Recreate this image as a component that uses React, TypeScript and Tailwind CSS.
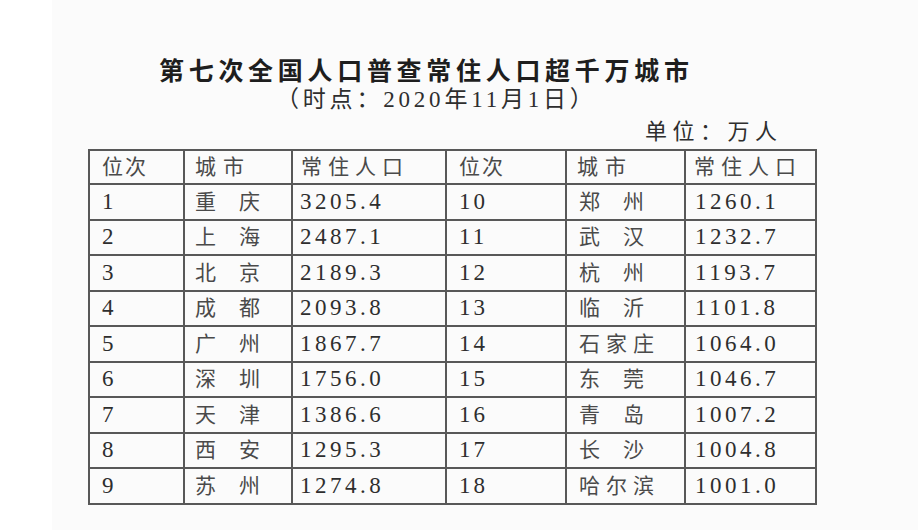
const rows: [string, string, string, string, string, string][] = [
  ["1", "重庆", "3205.4", "10", "郑州", "1260.1"],
  ["2", "上海", "2487.1", "11", "武汉", "1232.7"],
  ["3", "北京", "2189.3", "12", "杭州", "1193.7"],
  ["4", "成都", "2093.8", "13", "临沂", "1101.8"],
  ["5", "广州", "1867.7", "14", "石家庄", "1064.0"],
  ["6", "深圳", "1756.0", "15", "东莞", "1046.7"],
  ["7", "天津", "1386.6", "16", "青岛", "1007.2"],
  ["8", "西安", "1295.3", "17", "长沙", "1004.8"],
  ["9", "苏州", "1274.8", "18", "哈尔滨", "1001.0"],
];

const font = "font-['Liberation_Serif','Noto_Sans_CJK_SC',serif]";

const City = ({ name }: { name: string }) =>
  name.length === 2 ? (
    <span className="tracking-[1px]">{name[0] + "\u3000" + name[1]}</span>
  ) : (
    <span className="tracking-[6px]">{name}</span>
  );

const cell = "border-2 border-[#585858] p-0 align-middle leading-[24px]";

export default function App() {
  return (
    <div className={`flex h-[530px] w-full ${font} text-[#3a3a3a]`}>
      <div className="w-[52px] shrink-0 bg-white" />
      <div className="flex-1 bg-[#fbfbfb] pt-[54px]">
        <div className="pl-[107px] text-[25px] leading-[30px] font-bold tracking-[4.7px] text-[#1e1e1e] font-['Noto_Sans_CJK_SC',sans-serif]">
          第七次全国人口普查常住人口超千万城市
        </div>
        <div className="mt-[2px] pl-[224px] text-[23px] leading-[28px] tracking-[3.8px] text-[#2e2e2e]">
          （时点：2020年11月1日）
        </div>
        <div className="mt-[4px] pl-[593px] text-[22px] leading-[28px] tracking-[5.5px] text-[#2e2e2e]">
          单位：万人
        </div>
        <table className="ml-[36px] mt-[3px] w-[727px] table-fixed border-collapse text-[21px]">
          <colgroup>
            <col className="w-[95px]" />
            <col className="w-[108px]" />
            <col className="w-[154px]" />
            <col className="w-[120px]" />
            <col className="w-[119px]" />
            <col className="w-[131px]" />
          </colgroup>
          <thead>
            <tr className="h-[34px] text-[#4a4a4a]">
              <td className={`${cell} pl-[12px] tracking-[2px]`}>位次</td>
              <td className={`${cell} pl-[10px] tracking-[7px]`}>城市</td>
              <td className={`${cell} pl-[8px] tracking-[6px]`}>常住人口</td>
              <td className={`${cell} pl-[12px] tracking-[2px]`}>位次</td>
              <td className={`${cell} pl-[10px] tracking-[7px]`}>城市</td>
              <td className={`${cell} pl-[8px] tracking-[6px]`}>常住人口</td>
            </tr>
          </thead>
          <tbody>
            {rows.map((r) => (
              <tr key={r[0]} className="h-[35.5px]">
                <td className={`${cell} pl-[12px] text-[23px] tracking-[3px] text-[#2e2e2e]`}>{r[0]}</td>
                <td className={`${cell} pl-[10px] text-[#4a4a4a]`}>
                  <City name={r[1]} />
                </td>
                <td className={`${cell} pl-[7px] text-[23px] tracking-[3.5px] text-[#2e2e2e]`}>{r[2]}</td>
                <td className={`${cell} pl-[12px] text-[23px] tracking-[3px] text-[#2e2e2e]`}>{r[3]}</td>
                <td className={`${cell} pl-[12px] text-[#4a4a4a]`}>
                  <City name={r[4]} />
                </td>
                <td className={`${cell} pl-[9px] text-[23px] tracking-[3.5px] text-[#2e2e2e]`}>{r[5]}</td>
              </tr>
            ))}
          </tbody>
        </table>
      </div>
    </div>
  );
}
